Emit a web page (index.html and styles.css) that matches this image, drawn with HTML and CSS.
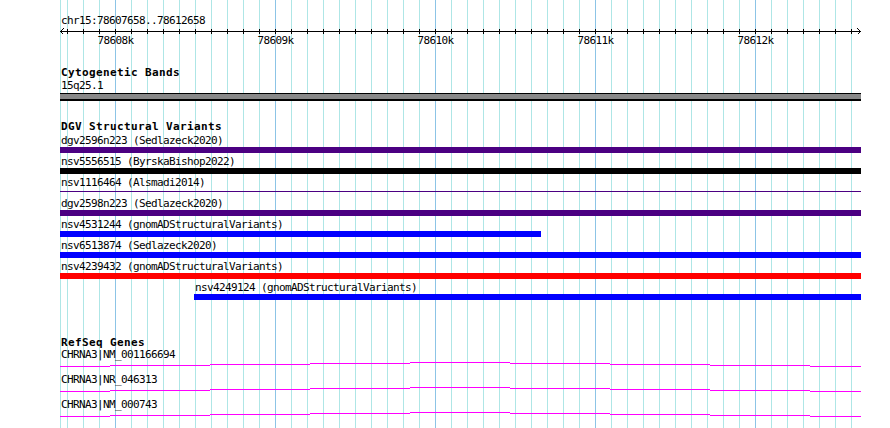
FILE: index.html
```html
<!DOCTYPE html>
<html lang="en">
<head>
    <meta charset="UTF-8">
    <meta name="viewport" content="width=device-width, initial-scale=1.0">
    <title>chr15:78607658..78612658</title>
    <link rel="stylesheet" href="styles.css">
</head>
<body>
    <div class="browser">
        <div class="tracks">
            <!-- ruler -->
            <div class="locus">chr15:78607658..78612658</div>
            <svg class="scale" width="801" height="20" viewBox="0 0 801 20">
                <path class="axis" d="M0 4.5H801"/>
                <polyline class="axis" points="3.5,1.5 0.5,4.5 3.5,7.5"/>
                <polyline class="axis" points="797.5,1.5 800.5,4.5 797.5,7.5"/>
                <path class="axis" d="M7.5 2V7M23.5 2V7M39.5 2V7M55.5 2V7M71.5 2V7M87.5 2V7M103.5 2V7M119.5 2V7M135.5 2V7M151.5 2V7M167.5 2V7M183.5 2V7M199.5 2V7M215.5 2V7M231.5 2V7M247.5 2V7M263.5 2V7M279.5 2V7M295.5 2V7M311.5 2V7M327.5 2V7M343.5 2V7M359.5 2V7M375.5 2V7M391.5 2V7M407.5 2V7M423.5 2V7M439.5 2V7M455.5 2V7M471.5 2V7M487.5 2V7M503.5 2V7M519.5 2V7M535.5 2V7M551.5 2V7M567.5 2V7M583.5 2V7M599.5 2V7M615.5 2V7M631.5 2V7M647.5 2V7M663.5 2V7M679.5 2V7M695.5 2V7M711.5 2V7M727.5 2V7M743.5 2V7M759.5 2V7M775.5 2V7M791.5 2V7"/>
                <text x="55.5" y="16.5">78608k</text>
                <text x="215.5" y="16.5">78609k</text>
                <text x="375.5" y="16.5">78610k</text>
                <text x="535.5" y="16.5">78611k</text>
                <text x="695.5" y="16.5">78612k</text>
            </svg>

            <!-- cytogenetic bands -->
            <div class="track cyto">
                <div class="track-title">Cytogenetic Bands</div>
                <div class="band-label">15q25.1</div>
                <div class="band"></div>
            </div>

            <!-- DGV -->
            <div class="track dgv">
                <div class="track-title">DGV Structural Variants</div>
                <div class="rows">
                    <div class="row">
                        <div class="label">dgv2596n223 (Sedlazeck2020)</div>
                        <div class="bar indigo"></div>
                    </div>
                    <div class="row">
                        <div class="label">nsv5556515 (ByrskaBishop2022)</div>
                        <div class="bar black"></div>
                    </div>
                    <div class="row">
                        <div class="label">nsv1116464 (Alsmadi2014)</div>
                        <div class="bar thin"></div>
                    </div>
                    <div class="row">
                        <div class="label">dgv2598n223 (Sedlazeck2020)</div>
                        <div class="bar indigo"></div>
                    </div>
                    <div class="row">
                        <div class="label">nsv4531244 (gnomADStructuralVariants)</div>
                        <div class="bar blue" style="width: 481px"></div>
                    </div>
                    <div class="row">
                        <div class="label">nsv6513874 (Sedlazeck2020)</div>
                        <div class="bar blue"></div>
                    </div>
                    <div class="row">
                        <div class="label">nsv4239432 (gnomADStructuralVariants)</div>
                        <div class="bar red"></div>
                    </div>
                    <div class="row" style="margin-left: 134px">
                        <div class="label">nsv4249124 (gnomADStructuralVariants)</div>
                        <div class="bar blue"></div>
                    </div>
                </div>
            </div>

            <!-- RefSeq -->
            <div class="track refseq">
                <div class="track-title">RefSeq Genes</div>
                <div class="gene">
                    <div class="label">CHRNA3|NM_001166694</div>
                    <svg class="intron" width="801" height="13" viewBox="0 0 801 13">
                        <path d="M0 5.5H50M50 4.5H150M150 3.5H250M250 2.5H350M350 1.5H450M450 2.5H550M550 3.5H650M650 4.5H750M750 5.5H801"/>
                    </svg>
                </div>
                <div class="gene">
                    <div class="label">CHRNA3|NR_046313</div>
                    <svg class="intron" width="801" height="13" viewBox="0 0 801 13">
                        <path d="M0 5.5H50M50 4.5H150M150 3.5H250M250 2.5H350M350 1.5H450M450 2.5H550M550 3.5H650M650 4.5H750M750 5.5H801"/>
                    </svg>
                </div>
                <div class="gene">
                    <div class="label">CHRNA3|NM_000743</div>
                    <svg class="intron" width="801" height="13" viewBox="0 0 801 13">
                        <path d="M0 5.5H50M50 4.5H150M150 3.5H250M250 2.5H350M350 1.5H450M450 2.5H550M550 3.5H650M650 4.5H750M750 5.5H801"/>
                    </svg>
                </div>
            </div>
        </div>
    </div>
</body>
</html>
```

FILE: styles.css
```css
* {
    box-sizing: border-box;
    margin: 0;
    padding: 0;
}

/* 11px glyphs squeezed onto a 6px cell, like the bitmap font of the original */
body {
    font-family: "DejaVu Sans Mono", monospace;
    font-size: 11px;
    letter-spacing: -0.62px;
    line-height: 12px;
    color: #000;
    background: #fff;
    overflow: hidden;
}

.browser {
    height: 100vh;
    padding-left: 60px;
}

/* grid: minor line every 100bp (16px), major every 1kb (160px) */
.tracks {
    width: 801px;
    height: 100%;
    background:
        linear-gradient(#aee6e6, #aee6e6) 0 0 / 1px 100% no-repeat,
        repeating-linear-gradient(to right, transparent 0 55px, #8cc4e6 55px 56px, transparent 56px 160px),
        repeating-linear-gradient(to right, transparent 0 7px, #aee6e6 7px 8px, transparent 8px 16px),
        #fff;
}

.locus {
    padding-top: 15px;
    padding-left: 1px;
}

.scale {
    display: block;
}

.scale .axis {
    fill: none;
    stroke: #000;
    stroke-width: 1;
    shape-rendering: crispEdges;
}

.scale text {
    font-family: "DejaVu Sans Mono", monospace;
    font-size: 11px;
    letter-spacing: -0.62px;
    text-anchor: middle;
    fill: #000;
}

.track {
    margin-top: 20px;
}

.track-title {
    font-weight: bold;
    letter-spacing: 0.38px;
    padding-left: 1px;
}

.label {
    padding-left: 1px;
    white-space: nowrap;
}

.band-label {
    margin-top: 1px;
    padding-left: 1px;
}

.band {
    margin-top: 1px;
    height: 8px;
    background: #888;
    border-top: 1px solid #000;
    border-bottom: 2px solid #000;
}

.rows {
    margin-top: 2px;
}

.row {
    padding-bottom: 3px;
}

.bar {
    height: 6px;
}

.bar.indigo {
    background: #4b0082;
}

.bar.black {
    background: #000;
}

.bar.blue {
    background: #0000ff;
}

.bar.red {
    background: #ff0000;
}

.bar.thin {
    background: linear-gradient(#4b0082, #4b0082) 0 2px / 100% 1px no-repeat;
}

.refseq {
    margin-top: 34px;
}

.intron {
    display: block;
}

.intron path {
    fill: none;
    stroke: #ff00ff;
    stroke-width: 1;
    shape-rendering: crispEdges;
}
```
